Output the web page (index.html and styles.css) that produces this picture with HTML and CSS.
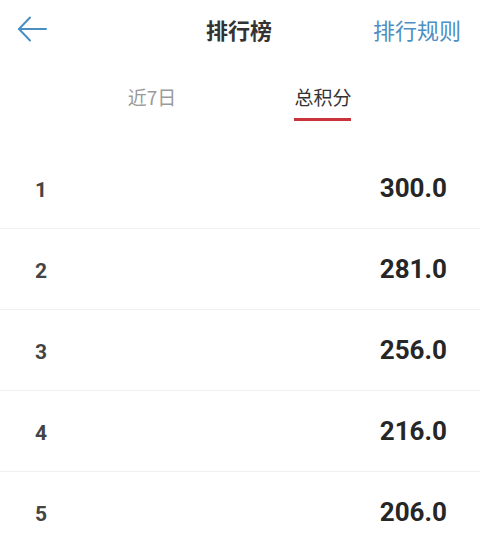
FILE: index.html
```html
<!DOCTYPE html>
<html lang="zh-CN">
<head>
<meta charset="utf-8">
<title>排行榜</title>
<link rel="stylesheet" href="styles.css">
</head>
<body>
<div class="page">
  <header class="header">
    <div class="back">
      <svg width="30" height="26" viewBox="0 0 30 26" fill="none" stroke="#4a8fc4" stroke-width="2" stroke-linecap="round" stroke-linejoin="round">
        <path d="M2 13 H29"/>
        <path d="M13 1.5 L2 13 L13 24.5"/>
      </svg>
    </div>
    <h1 class="title">排行榜</h1>
    <div class="rules">排行规则</div>
  </header>
  <nav class="tabs">
    <div class="tab">近7日</div>
    <div class="tab active">总积分</div>
  </nav>
  <ul class="list">
    <li class="row"><span class="rank">1</span><span class="score">300.0</span></li>
    <li class="row"><span class="rank">2</span><span class="score">281.0</span></li>
    <li class="row"><span class="rank">3</span><span class="score">256.0</span></li>
    <li class="row"><span class="rank">4</span><span class="score">216.0</span></li>
    <li class="row"><span class="rank">5</span><span class="score">206.0</span></li>
  </ul>
</div>
</body>
</html>
```

FILE: styles.css
```css
* { box-sizing: border-box; }
html, body {
  margin: 0;
  padding: 0;
  background: #ffffff;
}
body {
  font-family: "Noto Sans CJK SC", "Noto Sans", sans-serif;
  width: 480px;
  height: 548px;
  overflow: hidden;
}
.page {
  display: flex;
  flex-direction: column;
}
.header {
  height: 58px;
  display: grid;
  grid-template-columns: 1fr auto 1fr;
  align-items: center;
  padding: 0 19px 0 17px;
}
.back {
  display: flex;
  align-items: center;
  height: 26px;
}
.back svg { display: block; }
.title {
  margin: 0;
  font-size: 22px;
  font-weight: 700;
  color: #333333;
  line-height: 26px;
  letter-spacing: 0;
}
.rules {
  justify-self: end;
  font-size: 22px;
  color: #4d8fc3;
  line-height: 26px;
  letter-spacing: 0;
}
.tabs {
  display: grid;
  grid-template-columns: 171px 171px;
  justify-content: center;
  padding: 28px 5px 0 0;
  height: 90px;
}
.tab {
  justify-self: center;
  display: flex;
  flex-direction: column;
  align-items: center;
  font-size: 19px;
  line-height: 22px;
  color: #9a9a9a;
}
.tab.active {
  color: #333333;
}
.tab.active::after {
  content: "";
  display: block;
  width: 57px;
  height: 3px;
  margin-top: 10px;
  background: #c9333b;
}
.list {
  list-style: none;
  margin: 0;
  padding: 0;
}
.row {
  height: 81px;
  display: flex;
  align-items: center;
  justify-content: space-between;
  padding: 0 33px 0 35px;
  border-bottom: 1px solid #f0f0f0;
  font-family: Roboto, "Noto Sans", sans-serif;
}
.rank {
  font-size: 21px;
  font-weight: 700;
  color: #444444;
  padding-top: 3px;
}
.score {
  font-size: 26px;
  font-weight: 700;
  color: #262626;
}
```
